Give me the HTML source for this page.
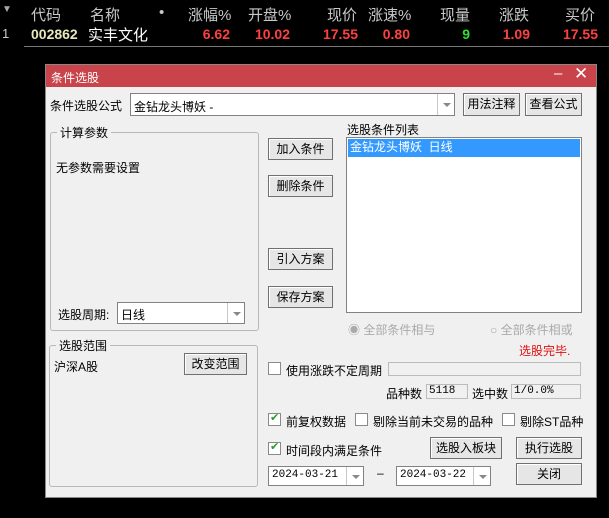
<!DOCTYPE html>
<html><head><meta charset="utf-8"><style>
*{margin:0;padding:0;box-sizing:border-box}
body{width:609px;height:518px;background:#000;position:relative;overflow:hidden;font-family:"Liberation Sans","Noto Sans CJK SC",sans-serif;font-size:12px;color:#000}
.a{position:absolute;white-space:nowrap}
.h{color:#c8c8c8;font-size:15px;top:4px}
.r{color:#ff4040;font-size:14px;font-weight:bold;top:26px;text-align:right}
.btn{position:absolute;background:#e6e6e6;border:1px solid #707070;box-shadow:inset 1px 1px 0 #fff;text-align:center;line-height:20px;font-size:12px}
.grp{position:absolute;border:1px solid #b8b8b8;border-radius:3px}
.lg{position:absolute;background:#f0f0f0;padding:0 3px;top:-9px;left:6px;font-size:12px}
.cb{position:absolute;width:13px;height:13px;border:1px solid #8a8a8a;background:#fff}
.cb.k::after{content:"✔";position:absolute;left:1px;top:-3px;font-size:11px;color:#2a9a2a}
.combo{position:absolute;background:#fff;border:1px solid #828282}
.arr{position:absolute;right:0;top:0;bottom:0;width:17px;border-left:1px solid #c8c8c8}
.arr::after{content:"";position:absolute;left:5px;top:45%;border:4px solid transparent;border-top:4px solid #888}
.fld{position:absolute;background:#f0f0f0;border:1px solid #bbb;font-family:"Liberation Mono",monospace;font-size:11px;line-height:13px;padding-left:2px}
</style></head><body>
<div class="a h" style="left:31px">代码</div>
<div class="a" style="left:2px;top:4px;color:#aaa;font-size:10px">▼</div>
<div class="a h" style="left:90px">名称</div>
<div class="a h" style="left:159px">•</div>
<div class="a h" style="left:188px">涨幅%</div>
<div class="a h" style="left:248px">开盘%</div>
<div class="a h" style="left:327px">现价</div>
<div class="a h" style="left:368px">涨速%</div>
<div class="a h" style="left:440px">现量</div>
<div class="a h" style="left:499px">涨跌</div>
<div class="a h" style="left:565px">买价</div>
<div class="a" style="left:2px;top:26px;color:#ccc;font-size:13px">1</div>
<div class="a" style="left:31px;top:26px;color:#e8e8c0;font-size:14px;font-weight:bold">002862</div>
<div class="a" style="left:88px;top:24px;color:#fff;font-size:15px">实丰文化</div>
<div class="a r" style="right:379px">6.62</div>
<div class="a r" style="right:319px">10.02</div>
<div class="a r" style="right:251px">17.55</div>
<div class="a r" style="right:199px">0.80</div>
<div class="a r" style="right:139px;color:#30e030">9</div>
<div class="a r" style="right:79px">1.09</div>
<div class="a r" style="right:11px">17.55</div>
<div class="a" style="left:24px;top:46px;width:585px;height:1px;background:#777"></div>

<div class="a" style="left:45px;top:64px;width:552px;height:434px;background:#f0f0f0;border:1px solid #888">
<div class="a" style="left:0;top:0;width:550px;height:22px;background:#c9434b"></div>
<div class="a" style="left:5px;top:4px;color:#fff;font-size:12px">条件选股</div>
<div class="a" style="left:508px;top:0px;color:#fff;font-size:15px">–</div>
<div class="a" style="left:528px;top:-1px;color:#fff;font-size:17px">✕</div>
</div>
<div class="a" style="left:50px;top:97px">条件选股公式</div>
<div class="combo" style="left:130px;top:93px;width:325px;height:23px"><span class="a" style="left:3px;top:4px">金钻龙头博妖 -</span><div class="arr"></div></div>
<div class="btn" style="left:463px;top:93px;width:57px;height:23px">用法注释</div>
<div class="btn" style="left:525px;top:93px;width:57px;height:23px">查看公式</div>

<div class="grp" style="left:50px;top:132px;width:209px;height:199px"><div class="lg">计算参数</div>
<div class="a" style="left:5px;top:26px">无参数需要设置</div>
<div class="a" style="left:7px;top:173px">选股周期:</div>
<div class="combo" style="left:66px;top:169px;width:128px;height:22px"><span class="a" style="left:3px;top:3px">日线</span><div class="arr"></div></div>
</div>
<div class="btn" style="left:268px;top:138px;width:65px;height:22px">加入条件</div>
<div class="btn" style="left:268px;top:175px;width:65px;height:22px">删除条件</div>
<div class="btn" style="left:268px;top:248px;width:65px;height:22px">引入方案</div>
<div class="btn" style="left:268px;top:286px;width:65px;height:22px">保存方案</div>
<div class="a" style="left:347px;top:121px">选股条件列表</div>
<div class="a" style="left:346px;top:137px;width:236px;height:176px;background:#fff;border:1px solid #828282">
<div class="a" style="left:1px;top:1px;width:232px;height:18px;background:#3399ff;color:#fff;padding-left:2px;line-height:17px">金钻龙头博妖&nbsp;&nbsp;日线</div></div>
<div class="a" style="left:348px;top:321px;color:#aaa">◉ 全部条件相与</div>
<div class="a" style="left:490px;top:321px;color:#aaa">○ 全部条件相或</div>
<div class="a" style="left:519px;top:342px;color:#e01010">选股完毕.</div>

<div class="grp" style="left:49px;top:345px;width:209px;height:142px"><div class="lg">选股范围</div>
<div class="a" style="left:4px;top:12px">沪深A股</div></div>
<div class="btn" style="left:184px;top:353px;width:63px;height:22px">改变范围</div>

<div class="cb" style="left:268px;top:362px"></div>
<div class="a" style="left:286px;top:362px">使用涨跌不定周期</div>
<div class="fld" style="left:388px;top:362px;width:193px;height:14px"></div>
<div class="a" style="left:386px;top:385px">品种数</div>
<div class="fld" style="left:426px;top:384px;width:42px;height:15px">5118</div>
<div class="a" style="left:472px;top:385px">选中数</div>
<div class="fld" style="left:511px;top:384px;width:70px;height:15px">1/0.0%</div>
<div class="cb k" style="left:268px;top:413px"></div>
<div class="a" style="left:286px;top:413px">前复权数据</div>
<div class="cb" style="left:355px;top:413px"></div>
<div class="a" style="left:373px;top:413px">剔除当前未交易的品种</div>
<div class="cb" style="left:502px;top:413px"></div>
<div class="a" style="left:520px;top:413px">剔除ST品种</div>
<div class="cb k" style="left:268px;top:442px"></div>
<div class="a" style="left:286px;top:442px">时间段内满足条件</div>
<div class="btn" style="left:430px;top:437px;width:72px;height:22px">选股入板块</div>
<div class="btn" style="left:516px;top:437px;width:66px;height:22px">执行选股</div>
<div class="combo" style="left:268px;top:466px;width:96px;height:20px"><span class="a" style="left:3px;top:2px;font-family:'Liberation Mono',monospace;font-size:11px">2024-03-21</span><div class="arr"></div></div>
<div class="a" style="left:377px;top:466px">–</div>
<div class="combo" style="left:396px;top:466px;width:95px;height:20px"><span class="a" style="left:3px;top:2px;font-family:'Liberation Mono',monospace;font-size:11px">2024-03-22</span><div class="arr"></div></div>
<div class="btn" style="left:516px;top:463px;width:66px;height:22px">关闭</div>
</body></html>
